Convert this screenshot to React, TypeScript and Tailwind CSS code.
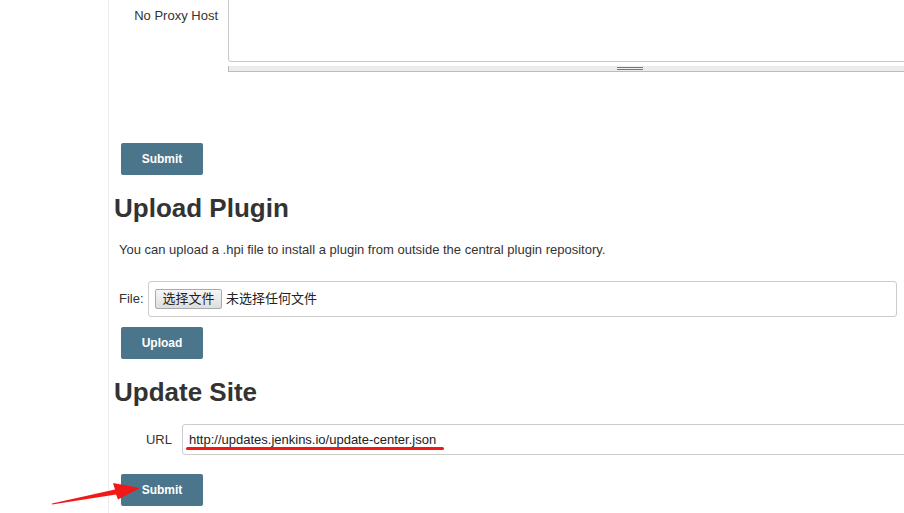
import React from 'react';

const font = { fontFamily: '"Liberation Sans", Arial, "Noto Sans CJK SC", sans-serif' };

const SubmitButton: React.FC<{ label: string }> = ({ label }) => (
  <button className="ml-[7px] flex h-[32px] w-[82px] items-center justify-center rounded-[2px] bg-[#4b758b] text-[12px] font-bold text-white">
    {label}
  </button>
);

const Heading: React.FC<{ children: React.ReactNode }> = ({ children }) => (
  <h1 className="text-[26px] font-bold leading-[28px] text-[#333]">{children}</h1>
);

const App: React.FC = () => {
  return (
    <div className="relative flex h-[513px] w-[904px] overflow-hidden bg-white text-[#333]" style={font}>
      <div className="w-[109px] shrink-0 border-r border-[#ececec]" />

      <div className="flex min-w-0 flex-1 flex-col pl-[5px]">
        {/* proxy settings, tail end */}
        <div className="-mt-[20px] flex">
          <div className="w-[114px] shrink-0 pr-[10px] pt-[28px] text-right text-[13px] leading-[16px]">No Proxy Host</div>
          <div className="flex shrink-0 flex-col">
            <div className="h-[82px] w-[802px] rounded-[3px] border border-[#c8c8c8] bg-white" />
            <div className="mt-[4px] flex h-[6px] w-[802px] items-center justify-center border-b border-l border-[#bcbcbc] bg-[#ececec]">
              <div className="flex w-[26px] flex-col gap-[1px]">
                <div className="h-px bg-[#777]" />
                <div className="h-px bg-[#777]" />
              </div>
            </div>
          </div>
        </div>

        <div className="mt-[71px]">
          <SubmitButton label="Submit" />
        </div>

        <div className="mt-[19px]">
          <Heading>Upload Plugin</Heading>
        </div>

        <p className="mt-[19px] pl-[5px] text-[13px] leading-[18px]">
          You can upload a .hpi file to install a plugin from outside the central plugin repository.
        </p>

        <div className="mt-[22px] flex items-center">
          <span className="w-[34px] shrink-0 pl-[5px] text-[13px]">File:</span>
          <div className="flex h-[36px] w-[749px] shrink-0 items-center rounded-[3px] border border-[#cccccc] pl-[6px]">
            <span className="flex h-[20px] w-[67px] items-center justify-center rounded-[2px] border border-[#a9a9a9] bg-gradient-to-b from-[#f6f6f6] to-[#dedede] text-[13px] text-[#222]">
              选择文件
            </span>
            <span className="ml-[4px] text-[13px] text-[#222]">未选择任何文件</span>
          </div>
        </div>

        <div className="mt-[10px]">
          <SubmitButton label="Upload" />
        </div>

        <div className="mt-[19px]">
          <Heading>Update Site</Heading>
        </div>

        <div className="mt-[18px] flex items-center">
          <span className="w-[68px] shrink-0 pr-[10px] text-right text-[13px]">URL</span>
          <div className="relative flex h-[31px] w-[760px] shrink-0 items-center rounded-[3px] border border-[#cccccc] pl-[6px]">
            <span className="text-[13px] text-[#222]">http://updates.jenkins.io/update-center.json</span>
            <div className="absolute left-[3px] top-[22px] h-[3px] w-[258px] rounded-full bg-[#f21818]" />
          </div>
        </div>

        <div className="mt-[19px]">
          <SubmitButton label="Submit" />
        </div>
      </div>

      {/* annotation arrow */}
      <svg className="absolute left-0 top-0" width="904" height="513" viewBox="0 0 904 513">
        <polygon
          points="52,504.5 116,494.5 118,499.5 140,488 113,483 115,489.5 52,503.5"
          fill="#f21818"
        />
      </svg>
    </div>
  );
};

export default App;
